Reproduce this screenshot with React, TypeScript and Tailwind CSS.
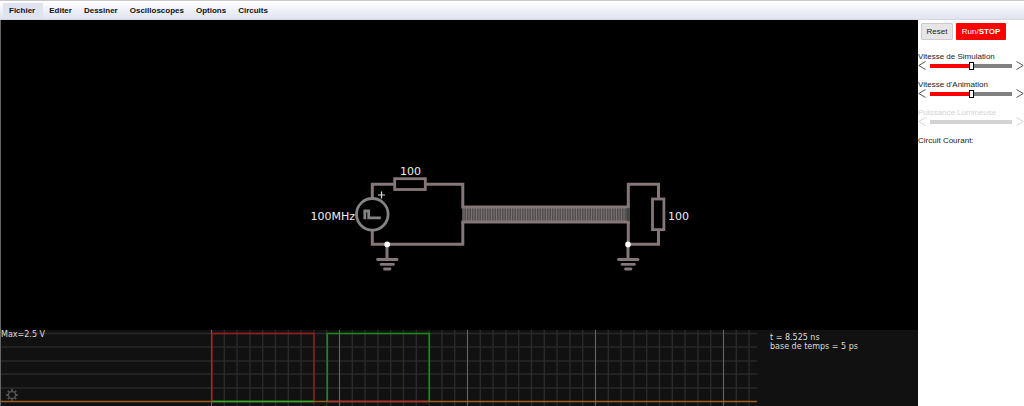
import { useState } from "react";

const menus = ["Fichier", "Editer", "Dessiner", "Oscilloscopes", "Options", "Circuits"];
const stripes = Array.from({ length: 65 }, (_, i) => 464 + i * 2.5);
const minorLines = Array.from({ length: 43 }, (_, i) => 211.5 + i * 12.8);
const majorLines = [211.5, 339.5, 467.5, 595.5, 723.5];
const levels = [333.5, 347, 361, 374, 388];

function MenuBar() {
  return (
    <nav className="flex h-5 items-end border-t border-t-[#c8c8c8] border-b border-b-[#d5d8e0] bg-linear-to-b from-white to-[#e0e4f1] pl-[3px]">
      {menus.map((name, i) => (
        <button
          key={name}
          type="button"
          className={
            i === 0
              ? "h-4 bg-[#e0e4f1] pr-2 pl-1.5 text-[8px] font-bold text-[#111]"
              : "h-4 px-1.5 text-[8px] font-bold text-[#111]"
          }
        >
          {name}
        </button>
      ))}
    </nav>
  );
}

function Ground({ x }: { x: number }) {
  return (
    <g>
      <path d={`M${x} 244V259`} strokeWidth="3" />
      <path d={`M${x - 9.5} 259.5h19.5M${x - 6} 264.3h12.5M${x - 2.5} 269h5.5`} strokeWidth="2.8" strokeLinecap="round" />
    </g>
  );
}

function Circuit() {
  return (
    <svg
      viewBox="1 20 917 310"
      className="block h-auto w-full bg-black font-['DejaVu_Sans',sans-serif] text-[11px]"
      role="img"
      aria-label="Circuit"
    >
      <g fill="none" stroke="#857777" strokeWidth="3">
        <path d="M372.3 198V184.3H394" />
        <path d="M426 184.3H462.8V206.5" />
        <path d="M372.3 230V244.3H462.8V222" />
        <path d="M628.3 206.5V184.3H658.5V198" />
        <path d="M628.3 222V244.3H658.5V230" />
        <rect x="394.7" y="178.7" width="30.6" height="10.8" strokeWidth="2.8" />
        <rect x="652.5" y="199" width="11.4" height="30.6" strokeWidth="2.8" />
        <Ground x={387} />
        <Ground x={628} />
        <rect x="462" y="208" width="165" height="13" fill="#534f4f" stroke="none" />
        <path d={stripes.map((x) => `M${x} 208V221`).join("")} stroke="#7a7373" strokeWidth="1" />
        <path d="M461.3 207H629.8M461.3 222H629.8" />
        <rect x="627" y="208" width="3" height="13" fill="#404644" stroke="none" />
        <circle cx="372.3" cy="214.3" r="15.8" stroke="#838383" strokeWidth="2.8" />
        <path d="M364.8 219.3V211H368.7V217.9H380.8" stroke="#838383" strokeWidth="2.8" />
      </g>
      <circle cx="387.2" cy="244.4" r="2.8" fill="#fff" />
      <circle cx="628" cy="244.4" r="2.8" fill="#fff" />
      <path d="M378 195H385M381.5 191.5V198.5" stroke="#ddd" strokeWidth="1.2" />
      <g fill="#eee">
        <text x="410.5" y="175" textAnchor="middle">100</text>
        <text x="355" y="220" textAnchor="end">100MHz</text>
        <text x="668" y="220">100</text>
      </g>
    </svg>
  );
}

function Scope() {
  return (
    <svg
      viewBox="1 330 917 76"
      className="block h-auto w-full bg-[#111] font-['DejaVu_Sans',sans-serif] text-[8px]"
      role="img"
      aria-label="Oscilloscope"
    >
      <g fill="none">
        <path d={levels.map((y) => `M1 ${y}H757`).join("")} stroke="#282828" strokeWidth="1.5" />
        <path d={minorLines.map((x) => `M${x} 330V406`).join("")} stroke="#2a2a2a" strokeWidth="1.4" />
        <path d={majorLines.map((x) => `M${x} 330V406`).join("")} stroke="#666" />
        <path d="M1 401.5H757" stroke="#a05c1c" strokeWidth="1.4" />
        <path d="M212 401.5V333.5H314V401.5" stroke="#a01c1c" strokeWidth="1.4" />
        <path d="M327 401.5H429" stroke="#b03030" strokeWidth="1.4" />
        <path d="M212 401.5H314" stroke="#28b028" strokeWidth="1.4" />
        <path d="M327.3 401.5V333.5H429.3V401.5" stroke="#188a18" strokeWidth="1.6" />
        <g stroke="#505050">
          <circle cx="12" cy="395" r="3.6" strokeWidth="1.5" />
          <path
            d="M12 391V389M12 399V401M8 395H6M16 395H18M9.2 392.2L7.8 390.8M14.8 392.2L16.2 390.8M9.2 397.8L7.8 399.2M14.8 397.8L16.2 399.2"
            strokeWidth="1.8"
          />
        </g>
      </g>
      <g fill="#ddd">
        <text x="1" y="337">Max=2.5 V</text>
        <text x="770" y="340">t = 8.525 ns</text>
        <text x="770" y="349">base de temps = 5 ps</text>
      </g>
    </svg>
  );
}

function Arrow({ label, d, disabled, onClick }: { label: string; d: string; disabled?: boolean; onClick: () => void }) {
  return (
    <button type="button" aria-label={label} disabled={disabled} onClick={onClick} className="text-[#555] disabled:text-[#d3d3d3]">
      <svg viewBox="0 0 8 9" className="block h-[9px] w-2" fill="none" stroke="currentColor">
        <path d={d} />
      </svg>
    </button>
  );
}

function SpeedSlider({ id, label, disabled }: { id: string; label: string; disabled?: boolean }) {
  const [value, setValue] = useState(50);
  return (
    <div className={disabled ? "text-[#d3d3d3]" : "text-[#222]"}>
      <label htmlFor={id} className="block h-2 leading-[8px] whitespace-nowrap">
        {label}
      </label>
      <div className="flex items-center gap-1">
        <Arrow label={`${label} -`} d="M7.5 0.5L0.8 4.5L7.5 8.5" disabled={disabled} onClick={() => setValue(Math.max(0, value - 1))} />
        <input
          id={id}
          type="range"
          min={0}
          max={100}
          value={value}
          disabled={disabled}
          onChange={(e) => setValue(Number(e.target.value))}
          style={{ backgroundImage: disabled ? "none" : `linear-gradient(to right, #ff0000 ${value}%, #808080 ${value}%)` }}
          className="h-1 min-w-0 flex-1 appearance-none bg-[#d3d3d3] [&::-webkit-slider-thumb]:h-2 [&::-webkit-slider-thumb]:w-[5px] [&::-webkit-slider-thumb]:appearance-none [&::-webkit-slider-thumb]:border [&::-webkit-slider-thumb]:border-black [&::-webkit-slider-thumb]:bg-white disabled:[&::-webkit-slider-thumb]:opacity-0"
        />
        <Arrow label={`${label} +`} d="M0.5 0.5L7.2 4.5L0.5 8.5" disabled={disabled} onClick={() => setValue(Math.min(100, value + 1))} />
      </div>
    </div>
  );
}

function Sidebar() {
  return (
    <aside className="w-[106px] shrink-0 bg-white pt-[3px] text-[8px] text-[#222]">
      <div className="flex gap-[3px] pl-[3px]">
        <button type="button" className="h-[17px] w-8 rounded-[1px] border border-[#ccc] bg-[#e6e6e6] text-[#222]">
          Reset
        </button>
        <button type="button" className="h-[17px] w-[50px] rounded-[1px] bg-[#ff0000] text-white">
          Run/<strong>STOP</strong>
        </button>
      </div>
      <div className="mt-[13px] flex flex-col gap-[11px]">
        <SpeedSlider id="simulation" label="Vitesse de Simulation" />
        <SpeedSlider id="animation" label="Vitesse d'Animation" />
        <SpeedSlider id="light" label="Puissance Lumineuse" disabled />
        <p className="leading-[8px]">Circuit Courant:</p>
      </div>
    </aside>
  );
}

export default function App() {
  return (
    <div className="flex min-h-screen flex-col bg-white font-['Liberation_Sans',Arial,sans-serif]">
      <MenuBar />
      <div className="flex flex-1">
        <main className="min-w-0 flex-1 border-l border-[#666] bg-[#111]">
          <Circuit />
          <Scope />
        </main>
        <Sidebar />
      </div>
    </div>
  );
}
